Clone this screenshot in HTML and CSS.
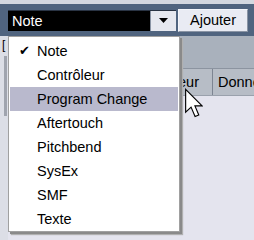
FILE: index.html
```html
<!DOCTYPE html>
<html>
<head>
<meta charset="utf-8">
<link rel="stylesheet" href="styles.css">
</head>
<body>
<div class="app">
  <div class="topbar">
    <div class="select">
      <span class="select-text">Note</span>
      <span class="select-arrow"><svg width="9" height="5" viewBox="0 0 9 5"><path d="M0 0H9L4.5 5Z" fill="#000"/></svg></span>
    </div>
    <div class="btn">Ajouter</div>
  </div>
  <div class="content">
    <div class="lside">
      <span class="bracket">[</span>
      <span class="thumb"></span>
    </div>
    <div class="table">
      <div class="tabletop"></div>
      <div class="thead">
        <div class="th th1">Valeur</div>
        <div class="th th2">Donnée</div>
      </div>
      <div class="tbody"></div>
    </div>
  </div>
  <ul class="menu">
    <li class="item"><span class="check">✔</span>Note</li>
    <li class="item">Contrôleur</li>
    <li class="item hl">Program Change</li>
    <li class="item">Aftertouch</li>
    <li class="item">Pitchbend</li>
    <li class="item">SysEx</li>
    <li class="item">SMF</li>
    <li class="item">Texte</li>
  </ul>
  <svg class="cursor" width="19" height="30" viewBox="0 0 13 21"><path d="M1 1V17L4.8 13.4L7.6 20L10.2 18.9L7.5 12.5H12.5Z" fill="#fff" stroke="#000" stroke-width="0.8" stroke-linejoin="miter"/></svg>
</div>
</body>
</html>
```
FILE: styles.css
```css
html, body { margin: 0; padding: 0; }
body { width: 254px; height: 240px; overflow: hidden; background: #e4e4ee; font-family: "Liberation Sans", Arial, sans-serif; }
.app { position: relative; width: 254px; height: 240px; }
.topbar {
  height: 32px;
  border-top: 4px solid #d4d8e0;
  background: #50647f;
  display: flex;
  align-items: center;
  padding: 0 6px 0 8px;
  gap: 2px;
}
.select {
  width: 168px; height: 20px;
  background: #000;
  display: flex; align-items: stretch;
  border-top: 1px solid #2a3444;
}
.select-text { flex: 1; color: #fff; font-size: 14.5px; line-height: 20px; padding-left: 4px; }
.select-arrow {
  width: 25px; background: #e6e8ef;
  display: flex; align-items: center; justify-content: center;
  border-left: 1px solid #8a94a4;
}
.btn {
  width: 68px; height: 21px;
  background: #e9ebf3;
  border: 1px solid #f4f6fb;
  border-right-color: #8a94a4; border-bottom-color: #8a94a4;
  font-size: 14.5px; line-height: 21px; text-align: center; color: #000;
}
.content { display: flex; height: 204px; }
.lside { width: 8px; background: #dcdee6; position: relative; }
.bracket { position: absolute; left: 2px; top: 3px; font-size: 12px; line-height: 12px; color: #000; }
.thumb { position: absolute; left: 4px; top: 20px; width: 3px; height: 60px; background: #a0a4ae; }
.table { flex: 1; display: flex; flex-direction: column; min-width: 0; overflow: hidden; }
.tabletop { height: 32px; background: #a9b1bc; }
.thead { height: 26px; display: flex; background: #b7bdc6; border-top: 1px solid #8c94a0; border-bottom: 1px solid #9aa1ac; font-size: 14.5px; line-height: 26px; }
.th { color: #000; }
.th1 { flex: none; width: 205px; border-right: 1px solid #7d8592; text-align: right; padding-right: 13px; box-sizing: border-box; }
.th2 { flex: none; padding-left: 5px; white-space: nowrap; }
.tbody { flex: 1; background: #e4e4ee; }
.menu {
  position: absolute; left: 8px; top: 36px;
  width: 172px; margin: 0; padding: 2px 1px 3px 1px;
  list-style: none;
  background: #fff;
  border: 1px solid #a0a0a0;
  box-shadow: 2px 2px 0 #8a8a8a, 3px 3px 1px #b0b0b0;
  box-sizing: border-box;
  height: 196px;
}
.item { height: 24px; line-height: 24px; font-size: 14.5px; color: #000; padding-left: 27px; position: relative; white-space: nowrap; }
.item.hl { background: #b9b9cd; }
.check { position: absolute; left: 9px; top: 0; font-size: 13px; }
.cursor { position: absolute; left: 184px; top: 88px; }
```
